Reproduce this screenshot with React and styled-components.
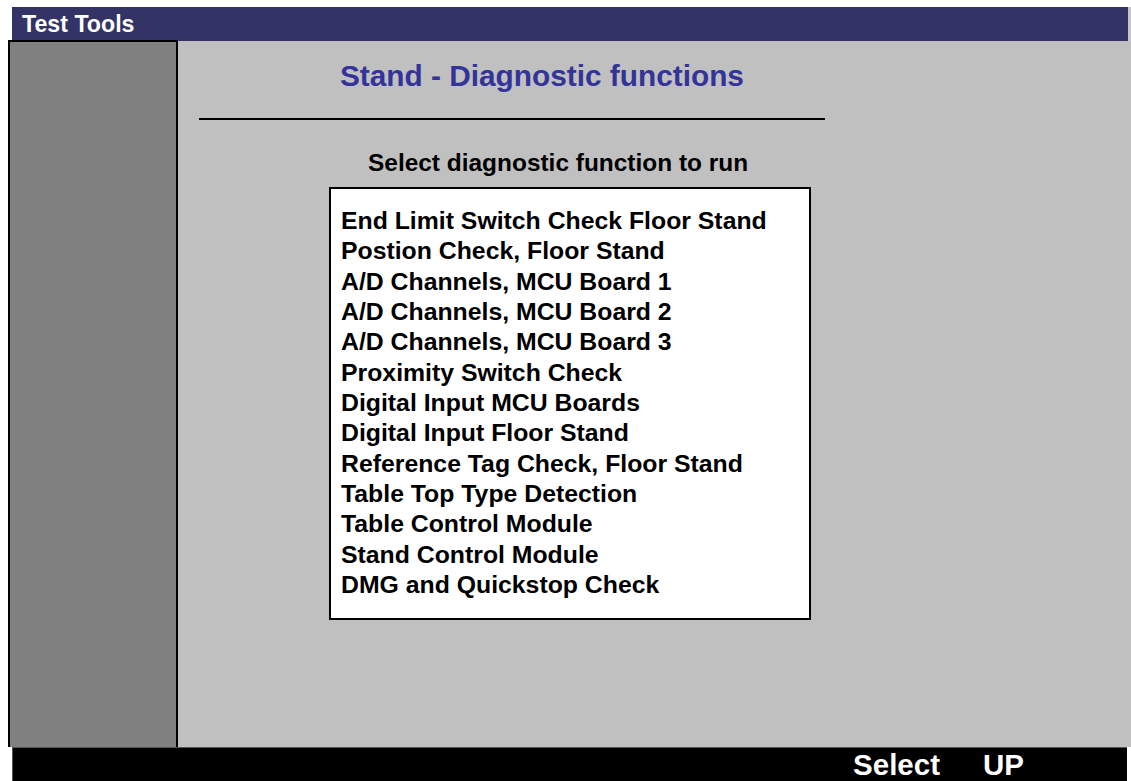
import styled, { createGlobalStyle } from "styled-components";

const GlobalStyle = createGlobalStyle`
  html, body {
    margin: 0;
    padding: 0;
    background: #fff;
  }
  body {
    font-family: "Liberation Sans", Arial, Helvetica, sans-serif;
    font-weight: bold;
  }
`;

const functions = [
  "End Limit Switch Check Floor Stand",
  "Postion Check, Floor Stand",
  "A/D Channels, MCU Board 1",
  "A/D Channels, MCU Board 2",
  "A/D Channels, MCU Board 3",
  "Proximity Switch Check",
  "Digital Input MCU Boards",
  "Digital Input Floor Stand",
  "Reference Tag Check, Floor Stand",
  "Table Top Type Detection",
  "Table Control Module",
  "Stand Control Module",
  "DMG and Quickstop Check",
];

const App = () => {
  return (
    <>
      <GlobalStyle />
      <Screen>
        <TitleBar>Test Tools</TitleBar>
        <Body>
          <SideBar />
          <Main>
            <PageTitle>Stand - Diagnostic functions</PageTitle>
            <Rule />
            <Prompt>Select diagnostic function to run</Prompt>
            <FunctionList>
              {functions.map((name) => (
                <FunctionItem key={name}>{name}</FunctionItem>
              ))}
            </FunctionList>
          </Main>
        </Body>
        <SoftKeys>
          <SoftKey>Select</SoftKey>
          <SoftKey>UP</SoftKey>
        </SoftKeys>
      </Screen>
    </>
  );
};

export default App;

const Screen = styled.div`
  display: flex;
  flex-direction: column;
  width: 1131px;
  height: 781px;
  padding-top: 7px;
  box-sizing: border-box;
  overflow: hidden;
`;

const TitleBar = styled.div`
  height: 34px;
  margin-left: 12px;
  width: 1119px;
  box-sizing: border-box;
  padding: 1px 0 0 10px;
  line-height: 33px;
  background: #333366;
  color: #fff;
  font-size: 23.2px;
  border-right: 3px solid #c6c6c6;
`;

const Body = styled.div`
  display: flex;
  height: 706px;
  margin-left: 8px;
  background: #c0c0c0;
`;

const SideBar = styled.div`
  width: 170px;
  box-sizing: border-box;
  background: #808080;
  border: 2px solid #000;
  border-bottom: none;
  margin-top: -1px;
`;

const Main = styled.div`
  flex: 1;
  display: flex;
  flex-direction: column;
  align-items: flex-start;
  padding-top: 17px;
`;

const PageTitle = styled.div`
  margin-left: 162px;
  font-size: 29.8px;
  line-height: 36px;
  color: #333399;
`;

const Rule = styled.div`
  margin: 24px 0 0 21px;
  width: 626px;
  height: 2px;
  background: #000;
`;

const Prompt = styled.div`
  margin: 29px 0 0 190px;
  font-size: 24.45px;
  line-height: 28px;
  color: #000;
`;

const FunctionList = styled.div`
  margin: 10px 0 0 151px;
  width: 482px;
  height: 433px;
  box-sizing: border-box;
  background: #fff;
  border: 2px solid #000;
  padding: 17px 0 0 10px;
`;

const FunctionItem = styled.div`
  font-size: 24.8px;
  line-height: 30.33px;
  color: #000;
  white-space: nowrap;
`;

const SoftKeys = styled.div`
  display: flex;
  justify-content: flex-end;
  gap: 43px;
  height: 34px;
  margin-left: 12px;
  width: 1115px;
  box-sizing: border-box;
  padding: 2px 103px 0 0;
  background: #000;
  border-left: 1px solid #555;
  border-top: 1px solid #555;
`;

const SoftKey = styled.div`
  font-size: 29.5px;
  line-height: 30px;
  color: #fff;
`;
